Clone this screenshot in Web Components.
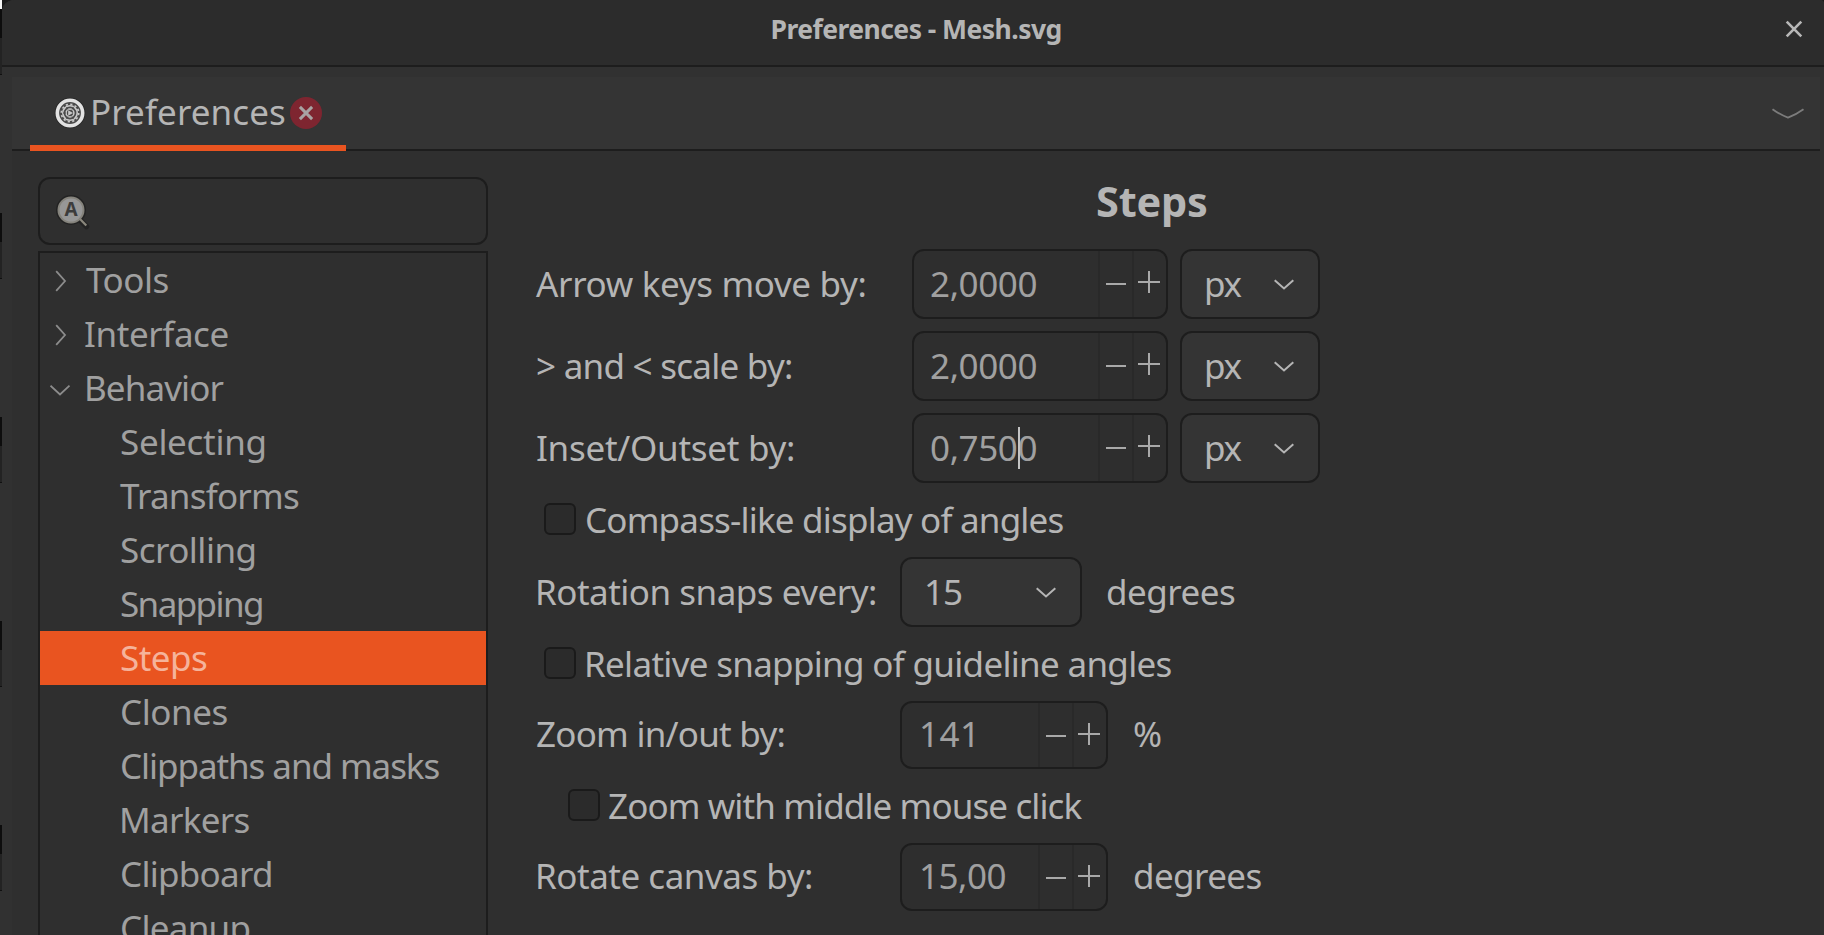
<!DOCTYPE html>
<html lang="en">
<head>
<meta charset="utf-8">
<title>Preferences - Mesh.svg</title>
<style>
html,body{margin:0;height:100%;overflow:hidden;background:#313131}
body{font-family:"Noto Sans","Open Sans",sans-serif;font-size:35px;color:#b5b5b5}
</style>
</head>
<body>
<prefs-window></prefs-window>
<script>
const define = (name, html, setup) => {
  const tpl = document.createElement('template');
  tpl.innerHTML = html;
  customElements.define(name, class extends HTMLElement {
    constructor() {
      super();
      this.attachShadow({mode: 'open'}).append(tpl.content.cloneNode(true));
    }
    connectedCallback() { if (setup) setup(this, this.shadowRoot); }
  });
};

/* Text whose visible ink starts at the box edge and spans exactly `w` pixels. */
const ctx = document.createElement('canvas').getContext('2d');
define('fit-text', `<style>
:host{display:block;white-space:pre;flex:none}
span{display:block}
</style><span><slot></slot></span>`, (el, root) => {
  const w = +el.getAttribute('w');
  const text = el.textContent;
  const cs = getComputedStyle(el);
  ctx.font = `${cs.fontWeight} ${cs.fontSize} ${cs.fontFamily}`;
  const m = ctx.measureText(text);
  const ink = m.actualBoundingBoxLeft + m.actualBoundingBoxRight;
  const span = root.querySelector('span');
  const nudge = /^[CMRBP1]/.test(text) ? 1 : /^(A|Zoom w|Inter|Trans)/.test(text) ? -1 : 0;
  el.style.width = w + 'px';
  if (text.length > 1) span.style.letterSpacing = ((w - ink) / (text.length - 1)).toFixed(3) + 'px';
  span.style.marginLeft = (m.actualBoundingBoxLeft + nudge).toFixed(2) + 'px';
});

define('title-bar', `<style>
:host{display:grid;grid-template-columns:1fr auto 1fr;height:65px;background:#2c2c2c;border-bottom:2px solid #1d1d1d;border-radius:12px 4px 0 0;font-size:26.5px;font-weight:700;line-height:59px}
fit-text{grid-column:2;margin-left:5px}
svg{justify-self:end;margin:19px 20px 0 0}
</style><fit-text w="288">Preferences - Mesh.svg</fit-text>
<svg width="20" height="20" viewBox="0 0 20 20" fill="none" stroke="#b8b8b8" stroke-width="2.6"><path d="M2.7 2.7 17.3 17.3M17.3 2.7 2.7 17.3"/></svg>`);

define('tab-strip', `<style>
:host{display:flex;justify-content:space-between;height:72px;background:#343434;border-bottom:2px solid #1d1d1d;padding-left:18px;line-height:70px}
.tab{display:flex;width:316px;height:68px;border-bottom:6px solid #e95420;box-sizing:content-box}
.gear{margin:20px 6px 0 24px}
.close{margin:20px 0 0 6px}
.more{margin:31px 15px 0 0}
svg{flex:none}
</style><div class="tab">
<svg class="gear" width="32" height="32" viewBox="0 0 32 32"><circle cx="16" cy="16" r="15.3" fill="#242424"/><circle cx="16" cy="16" r="12.7" fill="#4a4a4a" stroke="#e2e2e2" stroke-width="3.6"/>
<circle cx="16" cy="16" r="7.2" fill="none" stroke="#c9c9c9" stroke-width="1.6"/><circle cx="16" cy="16" r="8.7" fill="none" stroke="#c9c9c9" stroke-width="1.7" stroke-dasharray="2.2 2.355"/>
<circle cx="16" cy="16" r="3.9" fill="none" stroke="#c9c9c9" stroke-width="1.5"/><path d="M14.2 13.2 19 16l-4.8 2.8z" fill="#c9c9c9"/><path d="M12 16H9M18 19.5l1.5 2.6M18 12.5l1.5-2.6M14 12.5 12.5 10M14 19.5 12.5 22" stroke="#4a4a4a" stroke-width="1"/></svg>
<fit-text w="192">Preferences</fit-text>
<svg class="close" width="32" height="32" viewBox="0 0 32 32"><circle cx="16" cy="16" r="16" fill="#7e2530"/><path d="m9.9 9.9 12.2 12.2m0-12.2L9.9 22.1" stroke="#a8a3a3" stroke-width="3"/></svg>
</div>
<svg class="more" width="34" height="12" viewBox="0 0 34 12" fill="none" stroke="#7c7c7c" stroke-width="1.8"><path d="M1.5 1.2Q9 6.600 17 9.600 25 6.600 32.500 1.200"/></svg>`);

define('search-box', `<style>
:host{display:block;box-sizing:border-box;height:68px;border:2px solid #1d1d1d;border-radius:12px;padding:15px 0 0 15px}
svg{display:block}
text{font:700 19px "Noto Sans",sans-serif}
</style><svg width="36" height="36" viewBox="0 0 36 36"><path d="m25 26 6.500 6.500" stroke="#232323" stroke-width="5.500" stroke-linecap="round"/><circle cx="16" cy="16" r="15" fill="#232323"/><circle cx="16" cy="16" r="12.500" fill="#979797" stroke="#85837c" stroke-width="2"/><path d="m25 25 6.300 6.500" stroke="#8a877c" stroke-width="2.200"/><text x="16" y="22" text-anchor="middle" fill="#3c3c3c">A</text></svg>`);

define('tree-row', `<style>
:host{display:flex;height:54px;line-height:54px;box-sizing:border-box;padding-left:81px;color:#a0a0a0}
:host([state]){padding-left:0}
:host([selected]){background:#e95420;color:#f5b39b}
svg{display:none;flex:none;margin:17px 0 0 10px;fill:none;stroke:#8c8c8c;stroke-width:1.8}
:host([state]) svg{display:block}
:host([state]) ::slotted(*){margin-left:14px}
:host([state=open]) svg path:first-child,:host([state=closed]) svg path:last-child{display:none}
</style><svg width="22" height="22" viewBox="0 0 22 22"><path d="m6.200 1.200 8.800 9.800-8.800 9.800"/><path d="M.5 7.700 10 16.500l9.500-8.800"/></svg><slot></slot>`);

define('tree-view', `<style>
:host{display:block;box-sizing:border-box;border:2px solid #1d1d1d;border-bottom:0;height:684px;margin-top:6px;overflow:hidden}
</style><slot></slot>`);

define('spin-box', `<style>
:host{display:flex;flex:none;box-sizing:border-box;width:256px;height:70px;border:2px solid #1d1d1d;border-radius:12px;color:#a0a0a0;line-height:66px;position:relative;background:#2e2e2e;overflow:hidden}
:host([small]){width:208px;height:68px;line-height:62px}
.v{flex:1;padding-left:17px}
:host([small]) .v{padding-left:19px}
.b{width:32px;border-left:2px solid #292929;display:grid;justify-items:center;align-items:start}
svg{margin-top:20px;stroke:#a9a9a9;stroke-width:2}
.caret{display:none;position:absolute;left:104px;top:12px;width:2px;height:42px;background:#c4c4c4}
:host([editing]) .caret{display:block}
</style><div class="v"><slot></slot></div><div class="b"><svg width="20" height="24"><path d="M0 13h20"/></svg></div><div class="b"><svg width="22" height="22" style="margin-left:-2px"><path d="M0 11h22M11 0v22"/></svg></div><i class="caret"></i>`);

define('combo-box', `<style>
:host{display:flex;justify-content:space-between;flex:none;box-sizing:border-box;width:140px;height:70px;border:2px solid #1d1d1d;border-radius:12px;background:#343434;line-height:66px;padding:0 24px}
svg{margin-top:28px;flex:none}
</style><slot></slot><svg width="20" height="12" viewBox="0 0 20 12" fill="none" stroke="#b5b5b5" stroke-width="2"><path d="m.7 1.200 9.300 8.300 9.300-8.300"/></svg>`);

define('check-row', `<style>
:host{display:flex;height:32px;line-height:33px;gap:10px;padding-left:8px}
i{box-sizing:border-box;width:32px;height:32px;border:2px solid #1a1a1a;border-radius:6px;background:#2b2b2b;flex:none}
</style><i></i><slot></slot>`);

define('field-row', `<style>
:host{display:flex;height:70px;line-height:70px}
:host([short]){height:68px;line-height:66px}
.l{width:376px;padding-left:1px;box-sizing:border-box;flex:none}
:host([near]) .l{width:364px}
</style><div class="l"><slot name="label"></slot></div><slot></slot>`);

define('prefs-window', `<style>
:host{display:block;height:935px;overflow:hidden;box-sizing:border-box;padding-left:2px;background:linear-gradient(#f4f4f4,#f4f4f4) 0 0/2px 9px no-repeat,linear-gradient(#1a1a1a,#1a1a1a) 2px 0/100% 20px no-repeat,repeating-linear-gradient(#313131 0 9px,#0d0d0d 9px 38px,#232323 38px 74px,#101010 74px 75px,#313131 75px 204px)}
.frame{background:#313131;height:935px;border-radius:12px 4px 0 0}
.book{margin:10px 4px 0 10px;height:858px;background:#2f2f2f}
.page{display:flex;padding:26px 0 0 26px}
.side{width:450px;flex:none}
.main{margin-left:48px;flex:1}
.head{height:72px;display:flex;padding-left:561px;font-size:41.5px;font-weight:700;line-height:49px}
combo-box{margin-left:12px}
</style>
<div class="frame"><title-bar></title-bar><div class="book"><tab-strip></tab-strip>
<div class="page"><div class="side"><search-box></search-box><tree-view>
<tree-row state="closed"><fit-text w="82.500">Tools</fit-text></tree-row>
<tree-row state="closed"><fit-text w="142.500">Interface</fit-text></tree-row>
<tree-row state="open"><fit-text w="136.500">Behavior</fit-text></tree-row>
<tree-row><fit-text w="143.500">Selecting</fit-text></tree-row>
<tree-row><fit-text w="179">Transforms</fit-text></tree-row>
<tree-row><fit-text w="133.500">Scrolling</fit-text></tree-row>
<tree-row><fit-text w="141">Snapping</fit-text></tree-row>
<tree-row selected><fit-text w="86">Steps</fit-text></tree-row>
<tree-row><fit-text w="105.500">Clones</fit-text></tree-row>
<tree-row><fit-text w="317.500">Clippaths and masks</fit-text></tree-row>
<tree-row><fit-text w="127.500">Markers</fit-text></tree-row>
<tree-row><fit-text w="149">Clipboard</fit-text></tree-row>
<tree-row><fit-text w="127.500">Cleanup</fit-text></tree-row>
</tree-view></div>
<div class="main"><div class="head"><fit-text w="110">Steps</fit-text></div>
<field-row><fit-text slot="label" w="328.500">Arrow keys move by:</fit-text><spin-box><fit-text w="105.500">2,0000</fit-text></spin-box><combo-box><fit-text w="35.500">px</fit-text></combo-box></field-row>
<field-row style="margin-top:12px"><fit-text slot="label" w="254">&gt; and &lt; scale by:</fit-text><spin-box><fit-text w="105.500">2,0000</fit-text></spin-box><combo-box><fit-text w="35.500">px</fit-text></combo-box></field-row>
<field-row style="margin-top:12px"><fit-text slot="label" w="256">Inset/Outset by:</fit-text><spin-box editing><fit-text w="105.500">0,7500</fit-text></spin-box><combo-box><fit-text w="35.500">px</fit-text></combo-box></field-row>
<check-row style="margin-top:20px"><fit-text w="476.500">Compass-like display of angles</fit-text></check-row>
<field-row near style="margin-top:22px"><fit-text slot="label" w="337">Rotation snaps every:</fit-text><combo-box style="margin-left:0;width:182px"><fit-text w="35">15</fit-text></combo-box><fit-text w="128" style="margin-left:25px">degrees</fit-text></field-row>
<check-row style="margin-top:20px"><fit-text w="584.500">Relative snapping of guideline angles</fit-text></check-row>
<field-row near short style="margin-top:22px"><fit-text slot="label" w="246.500">Zoom in/out by:</fit-text><spin-box small><fit-text w="51">141</fit-text></spin-box><fit-text w="27" style="margin-left:26px">%</fit-text></field-row>
<check-row style="margin:20px 0 0 24px"><fit-text w="473.500">Zoom with middle mouse click</fit-text></check-row>
<field-row near short style="margin-top:22px"><fit-text slot="label" w="273">Rotate canvas by:</fit-text><spin-box small><fit-text w="83.500">15,00</fit-text></spin-box><fit-text w="127.500" style="margin-left:26px">degrees</fit-text></field-row>
</div></div></div></div>`);
</script>
</body>
</html>
